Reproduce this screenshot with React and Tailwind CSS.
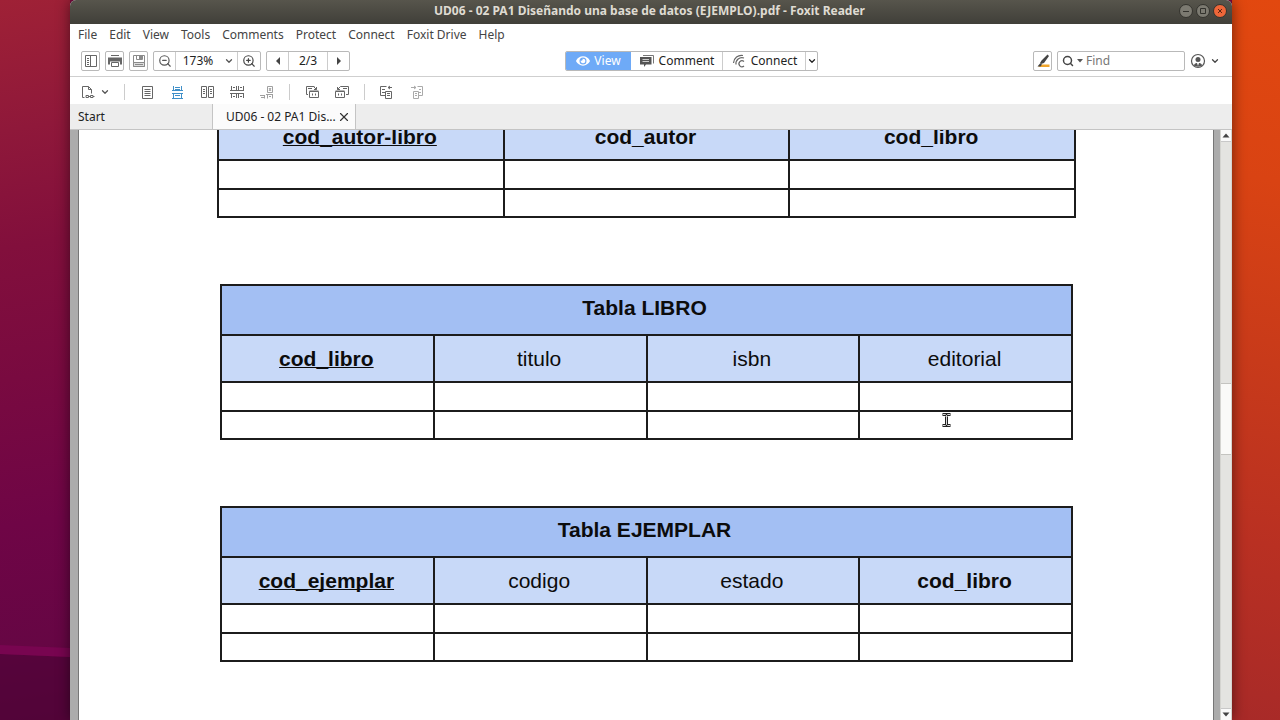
import { ChevronDown, X, Search, ZoomIn, ZoomOut } from 'lucide-react';
import { FaEye } from 'react-icons/fa';

const menuItems = ['File', 'Edit', 'View', 'Tools', 'Comments', 'Protect', 'Connect', 'Foxit Drive', 'Help'];

const tables = [
    {
        id: 'autor-libro',
        columns: [
            { name: 'cod_autor-libro', style: 'font-bold underline' },
            { name: 'cod_autor', style: 'font-bold' },
            { name: 'cod_libro', style: 'font-bold' },
        ],
    },
    {
        id: 'libro',
        title: 'Tabla LIBRO',
        columns: [
            { name: 'cod_libro', style: 'font-bold underline' },
            { name: 'titulo', style: 'font-normal' },
            { name: 'isbn', style: 'font-normal' },
            { name: 'editorial', style: 'font-normal' },
        ],
    },
    {
        id: 'ejemplar',
        title: 'Tabla EJEMPLAR',
        columns: [
            { name: 'cod_ejemplar', style: 'font-bold underline' },
            { name: 'codigo', style: 'font-normal' },
            { name: 'estado', style: 'font-normal' },
            { name: 'cod_libro', style: 'font-bold' },
        ],
    },
];

function Icon({ children, className = 'text-[#666]' }) {
    return (
        <svg viewBox="0 0 16 16" className={`size-4 shrink-0 ${className}`} fill="none" stroke="currentColor" aria-hidden="true">
            {children}
        </svg>
    )
}

function Desktop() {
    return (
        <>
            <div className="absolute inset-y-0 left-0 w-[70px] bg-[linear-gradient(170deg,#9f2136_0%,#8f183a_18%,#820f3c_34%,#790a40_52%,#6f0546_72%,#660644_89%,#540436_100%)]">
                <svg viewBox="0 0 70 80" className="absolute bottom-0 left-0 h-20 w-full" preserveAspectRatio="none" aria-hidden="true">
                    <path d="M0 14 70 17V80H0Z" fill="#52043a" opacity=".75" />
                    <path d="M0 5 70 8V17L0 14Z" fill="#780550" />
                </svg>
            </div>
            <div className="absolute inset-y-0 right-0 w-12 bg-[linear-gradient(190deg,#e2480f_0%,#d94313_25%,#c83a1a_50%,#b93022_75%,#a82a28_100%)]" />
        </>
    )
}

function TitleBar() {
    const button = 'grid size-[14px] place-items-center rounded-full border border-[#34332e]';
    return (
        <header className="flex h-6 shrink-0 items-center rounded-t-md bg-linear-to-b from-[#57554c] to-[#403f39] pr-[5px] pb-[2px]">
            <h1 className="flex-1 pl-[50px] text-center text-[12px] leading-4 font-bold text-[#dfdbd2]">
                UD06 - 02 PA1 Diseñando una base de datos (EJEMPLO).pdf - Foxit Reader
            </h1>
            <div className="flex gap-[3px]">
                <button aria-label="Minimize" className={`${button} bg-[#7c7a71]`}>
                    <svg viewBox="0 0 12 12" className="size-3" stroke="#33322d" aria-hidden="true"><path d="M3 6.5h6" /></svg>
                </button>
                <button aria-label="Maximize" className={`${button} bg-[#7c7a71]`}>
                    <svg viewBox="0 0 12 12" className="size-3" stroke="#33322d" fill="none" aria-hidden="true"><path d="M3.5 3.5h5v5h-5z" /></svg>
                </button>
                <button aria-label="Close" className={`${button} bg-[#ee6639]`}>
                    <svg viewBox="0 0 12 12" className="size-3" stroke="#5b2412" aria-hidden="true"><path d="m4 4 4 4m0-4L4 8" /></svg>
                </button>
            </div>
        </header>
    )
}

function MainToolbar() {
    const box = 'flex h-5 items-center justify-center rounded-[2px] border border-[#b9b9b9] bg-white';
    const cell = 'flex h-full items-center justify-center';
    return (
        <div className="flex h-8 items-center justify-between border-b border-[#cfcfcf] pr-3 pl-[11px]">
            <div className="flex gap-[5px]">
                <button aria-label="Navigation panel" className={`${box} w-[19px]`}>
                    <Icon><path d="M2.5 2.5h11v11h-11zM7.5 2.5v11M4 5.5h2M4 7.5h2M4 9.5h2M4 11.5h2" /></Icon>
                </button>
                <button aria-label="Print" className={`${box} w-[19px]`}>
                    <Icon>
                        <path d="M4 2.5h8" />
                        <path d="M1 4.500h14v7h-2v-3H3v3H1z" fill="currentColor" stroke="none" />
                        <path d="M4.500 9.500h7v4h-7z" />
                    </Icon>
                </button>
                <button aria-label="Save" className={`${box} w-[19px]`}>
                    <Icon className="text-[#8a8a8a]">
                        <path d="M2.500 2.500h11v11h-11zM5.500 2.500v4h6v-4" />
                        <path d="M8 3h3v3H8z" fill="currentColor" stroke="none" />
                        <path d="M2.500 9.500h11v4h-11z" fill="#ddd" />
                        <path d="M4 11.500h8" />
                    </Icon>
                </button>
                <div className={box}>
                    <button aria-label="Zoom out" className={`${cell} w-[22px] border-r border-[#ccc]`}><ZoomOut className="size-[14px] text-[#555]" strokeWidth={2} /></button>
                    <input aria-label="Zoom level" defaultValue="173%" className="w-11 text-center text-[12px] leading-4 text-[#222] outline-none" />
                    <button aria-label="Zoom presets" className={`${cell} w-[18px] border-r border-[#ccc]`}><ChevronDown className="size-[10px] text-[#555]" strokeWidth={3} /></button>
                    <button aria-label="Zoom in" className={`${cell} w-[22px]`}><ZoomIn className="size-[14px] text-[#444]" strokeWidth={2} /></button>
                </div>
                <div className={box}>
                    <button aria-label="Previous page" className={`${cell} w-[22px] border-r border-[#ccc]`}>
                        <svg viewBox="0 0 6 8" className="h-2 w-1.5" fill="#444" aria-hidden="true"><path d="M5 0v8L1 4z" /></svg>
                    </button>
                    <input aria-label="Page" defaultValue="2/3" className="w-[38px] text-center text-[12px] leading-4 text-[#222] outline-none" />
                    <button aria-label="Next page" className={`${cell} w-[22px] border-l border-[#ccc]`}>
                        <svg viewBox="0 0 6 8" className="h-2 w-1.5" fill="#444" aria-hidden="true"><path d="M1 0v8l4-4z" /></svg>
                    </button>
                </div>
            </div>

            <div className={`${box} overflow-hidden text-[12px] leading-4 text-[#222]`}>
                <button className={`${cell} w-[65px] gap-1 bg-[#6eaaf7] text-white`}><FaEye className="size-[14px]" />View</button>
                <button className={`${cell} w-[92px] gap-1 border-r border-[#ccc]`}>
                    <Icon className="text-[#555]">
                        <path d="M4 2.500h10.500v8" stroke="#777" />
                        <path d="M1 4h11.500v7.500H7L5 14v-2.500H1z" fill="currentColor" stroke="none" />
                        <path d="M3.500 6.500h6.500M3.500 8.500h6.500" stroke="#ccc" />
                    </Icon>
                    Comment
                </button>
                <button className={`${cell} w-[83px] gap-1 border-r border-[#ccc]`}>
                    <Icon>
                        <path d="M2.500 10A8 8 0 0 1 12 2.500M5 11.500A6 6 0 0 1 13 5M13 8.500a3 3 0 1 0 0 4.500" strokeWidth="1.200" />
                    </Icon>
                    Connect
                </button>
                <button aria-label="Connect options" className={`${cell} w-[11px]`}><ChevronDown className="size-[10px]" strokeWidth={3} /></button>
            </div>

            <div className="flex items-center gap-[5px]">
                <button aria-label="Highlight" className={`${box} w-[19px]`}>
                    <Icon>
                        <path d="M7 11.500h7.500v2.500H3z" fill="#f0a52c" stroke="none" />
                        <path d="m12.500 1.500 1.500 1.500-5 7-3 1-1-1 1.500-2.500zM5 10.500l-2.500 3h3l1.500-2z" fill="#444" stroke="none" />
                    </Icon>
                </button>
                <label className={`${box} w-32 gap-[3px] pr-1 pl-1`}>
                    <Search className="size-3 shrink-0 text-[#444]" strokeWidth={3} />
                    <svg viewBox="0 0 6 4" className="h-1 w-1.5 shrink-0" fill="#555" aria-hidden="true"><path d="M0 0h6L3 3.500z" /></svg>
                    <input aria-label="Find" placeholder="Find" className="w-full min-w-0 text-[12px] leading-4 outline-none placeholder:text-[#777]" />
                </label>
                <button aria-label="Account" className="flex items-center gap-1">
                    <Icon className="text-[#555]">
                        <circle cx="8" cy="8" r="6.500" strokeWidth="1.200" />
                        <circle cx="8" cy="6.500" r="2.500" fill="currentColor" stroke="none" />
                        <path d="M4 12.500c0-2 2-2.500 4-2.500s4 .5 4 2.500c-1 1.500-7 1.500-8 0z" fill="currentColor" stroke="none" />
                        <path d="M7 10h2l-1 3z" fill="#fff" stroke="none" />
                    </Icon>
                    <ChevronDown className="size-[10px] text-[#444]" strokeWidth={3} />
                </button>
            </div>
        </div>
    )
}

function ViewToolbar() {
    return (
        <div className="flex h-[27px] items-center gap-[14px] pt-[3px] pl-[10px]">
            <button aria-label="Select document mode" className="flex items-center gap-1">
                <Icon>
                    <path d="M4.500 13.500h-2v-11h6l3 3v4M8.500 2.500v3h3" />
                    <path d="M6 11.500h2.500v2H6zM10.500 11.500H13v2h-2.500zM8.500 12.500h2M13 12.500h1.500" />
                </Icon>
                <ChevronDown className="size-[10px] text-[#555]" strokeWidth={3} />
            </button>
            <span className="h-4 w-px bg-[#ccc]" />
            <button aria-label="Single page">
                <Icon><path d="M3.500 2.500h10v12h-10zM5.500 5.500h6M5.500 7.500h6M5.500 9.500h6M5.500 11.500h6" /></Icon>
            </button>
            <button aria-label="Continuous">
                <Icon className="text-[#3f8fc8]"><path d="M4.500 2v5M12.500 2v5M6 3.500h5M6 5.500h5M3 6.500h11M3 9.500h11M4.500 9.500v5M12.500 9.500v5M6 11.500h5M3 14.500h11" /></Icon>
            </button>
            <button aria-label="Facing">
                <Icon><path d="M2.500 2.500h5v11h-5zM9.500 2.500h5v11h-5zM4 5.500h2M4 7.500h2M4 9.500h2M11 5.500h2M11 7.500h2M11 9.500h2" /></Icon>
            </button>
            <button aria-label="Continuous facing">
                <Icon><path d="M2.500 2v4.500M7.500 2v4.500M9.500 2v4.500M14.500 2v4.500M4 3.500h2M11 3.500h2M1 6.500h14M1 9.500h14M2.500 9.500V14M7.500 9.500V14M9.500 9.500V14M14.500 9.500V14M4 12.500h2M11 12.500h2" /></Icon>
            </button>
            <button aria-label="Split view">
                <Icon className="text-[#a0a0a0]"><path d="M8.500 2.500h5v6h-5zM10 4l2 3m0-3-2 3M7 10.500h7M8.500 10.500v4M13.500 10.500v4M10 12.500h2M1 11.500h5M2 13.500h3M5.500 11.500v3" /></Icon>
            </button>
            <span className="h-4 w-px bg-[#ccc]" />
            <button aria-label="Rotate right">
                <Icon><path d="M4 10.500H2.500v-8h8M4 4.500h4M9.500 2.500l3 3M12.500 3v2.500H10M5.500 7.500h9v6h-9zM5.500 7h9M8.500 9.500v2M11.500 9.500v2" /></Icon>
            </button>
            <button aria-label="Rotate left">
                <Icon><path d="M12 10.500h2.500v-8h-8M9 4.500h4M6.500 2.500l-3 3M3.500 3v2.500H6M1.500 7.500h9v6h-9zM1.500 7h9M4.500 9.500v2M7.500 9.500v2" /></Icon>
            </button>
            <span className="h-4 w-px bg-[#ccc]" />
            <button aria-label="Previous view">
                <Icon><path d="M6 11.500H1.500v-9h6M3 5.500h3M3 8.500h3M9 3.500h4M11 2 9 3.500 11 5M6.500 7.500h6v7h-6zM8 9.500h3M8 11.500h3" /></Icon>
            </button>
            <button aria-label="Next view">
                <Icon className="text-[#aaa]"><path d="M10 11.500h3.500v-9h-5M10 5.500h2M10 8.500h2M2 3.500h5M5 2l2 1.500L5 5M4.500 7.500h5v7h-5zM6 9.500h2M6 11.500h2" /></Icon>
            </button>
        </div>
    )
}

function Tabs() {
    return (
        <nav className="flex h-[26px] shrink-0 border-b border-[#c4c4c4] bg-[#ededed] text-[12px] leading-4 text-[#222]">
            <button className="w-[143px] border-r border-[#c4c4c4] pl-2 text-left">Start</button>
            <div className="flex w-[143px] items-center justify-between border-r border-[#c4c4c4] bg-[#fbfbfb] pr-1 pl-[13px]">
                <button className="whitespace-nowrap">UD06 - 02 PA1 Dis...</button>
                <button aria-label="Close tab"><X className="size-[14px] text-[#333]" strokeWidth={2} /></button>
            </div>
        </nav>
    )
}

function SchemaTable({ table }) {
    const line = 'border-2 border-[#1c1c1c]';
    return (
        <table className="w-full table-fixed border-collapse text-[21px] leading-6 text-[#0c0c0c]">
            <thead>
                {table.title && (
                    <tr className="h-[50px] bg-[#a3bff3]">
                        <th colSpan={table.columns.length} className={`${line} p-0 pr-1 pb-1`}>{table.title}</th>
                    </tr>
                )}
                <tr className="h-[47px] bg-[#c8d9f8]">
                    {table.columns.map(col => (
                        <th key={col.name} className={`${line} p-0 pr-[2px] decoration-1 underline-offset-1 [text-decoration-skip-ink:none] ${col.style}`}>{col.name}</th>
                    ))}
                </tr>
            </thead>
            <tbody>
                <tr className="h-[29px]">
                    {table.columns.map(col => <td key={col.name} className={`${line} p-0`} />)}
                </tr>
                <tr className="h-7">
                    {table.columns.map(col => <td key={col.name} className={`${line} p-0`} />)}
                </tr>
            </tbody>
        </table>
    )
}

function Scrollbar() {
    const end = 'grid h-3 shrink-0 place-items-center bg-[#fafafa]';
    return (
        <div className="flex w-3 shrink-0 flex-col border-x border-[#d4d4d0] bg-[#e4e4e1]">
            <button aria-label="Scroll up" className={`${end} border-b border-[#c8c8c8]`}>
                <svg viewBox="0 0 8 5" className="h-[5px] w-2" fill="#444" aria-hidden="true"><path d="M4 0.500 7.500 4.500h-7z" /></svg>
            </button>
            <div className="flex-[242]" />
            <div className="flex-[70] border-y border-[#c4c4c0] bg-[#fafaf8]" />
            <div className="flex-[254]" />
            <button aria-label="Scroll down" className={`${end} border-t border-[#c8c8c8]`}>
                <svg viewBox="0 0 8 5" className="h-[5px] w-2" fill="#444" aria-hidden="true"><path d="M4 4.500.5.500h7z" /></svg>
            </button>
        </div>
    )
}

function App() {
    return (
        <div className="relative h-screen overflow-hidden bg-[#7b0b3e] pr-12 pl-[70px] font-['Noto_Sans',sans-serif]">
            <Desktop />
            <div className="relative flex h-full flex-col rounded-t-md bg-white shadow-[0_0_14px_rgba(0,0,0,0.5)]">
                <TitleBar />
                <div className="shrink-0">
                    <nav className="flex h-[21px] items-center gap-3 pl-2 text-[12px] leading-4 text-[#444]">
                        {menuItems.map(item => <button key={item}>{item}</button>)}
                    </nav>
                    <MainToolbar />
                    <ViewToolbar />
                </div>
                <Tabs />
                <div className="flex min-h-0 flex-1 bg-[#acacac] pl-2">
                    <main className="relative min-w-0 flex-1 overflow-hidden border-x border-[#777] bg-white font-['Liberation_Sans',Arial,sans-serif]">
                        <div className="-mt-[18px] pr-[137px] pl-[138px]">
                            <SchemaTable table={tables[0]} />
                        </div>
                        <div className="flex flex-col gap-[66px] pt-[66px] pr-[140px] pl-[141px]">
                            <SchemaTable table={tables[1]} />
                            <SchemaTable table={tables[2]} />
                        </div>
                        <svg viewBox="0 0 9 14" className="absolute top-[283px] left-[863px] h-[14px] w-[9px]" fill="none" aria-hidden="true">
                            <path d="M0.500 1.500H3.500l1 1 1-1H8.500M0.500 12.500H3.500l1-1 1 1H8.500M4.500 2.500v9" stroke="#222" strokeWidth="3" />
                            <path d="M1 1.500h2.500l1 1 1-1H8M1 12.500h2.500l1-1 1 1H8M4.500 2.500v9" stroke="#d8d8d8" />
                        </svg>
                    </main>
                    <div className="w-1.5 shrink-0" />
                    <Scrollbar />
                </div>
            </div>
        </div>
    )
}

export default App
